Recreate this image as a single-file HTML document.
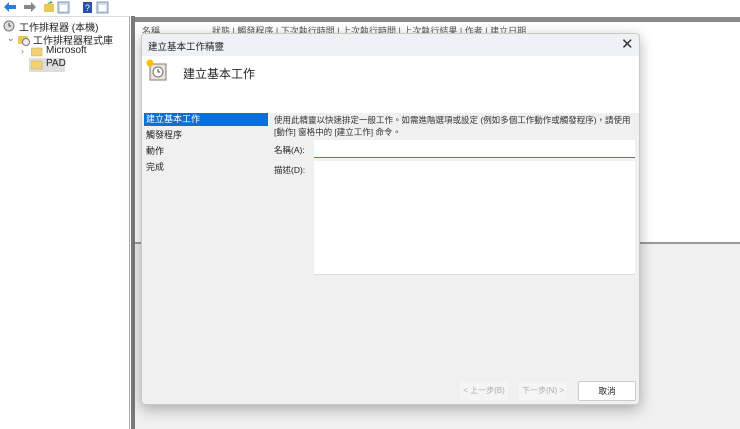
<!DOCTYPE html>
<html><head><meta charset="utf-8"><style>
*{margin:0;padding:0;box-sizing:border-box}
body{width:740px;height:429px;overflow:hidden;background:#fff;font-family:"Liberation Sans","Noto Sans CJK TC",sans-serif;font-size:9px;color:#222;position:relative}
.a{position:absolute}
</style></head><body>
<div class="a" style="left:0;top:0;width:740px;height:16px;background:#fff"></div>
<svg class="a" style="left:2px;top:1px" width="115" height="13">
<path d="M2 6 L7 1 V4 H14 V8 H7 V11 Z" fill="#2a7fd4"/>
<path d="M34 6 L29 1 V4 H22 V8 H29 V11 Z" fill="#888"/>
<rect x="42" y="3" width="10" height="8" fill="#e8c85a"/><path d="M45 3 l4 -3 2 2z" fill="#3a3"/>
<rect x="56" y="1" width="11" height="11" fill="#cfdbe8" stroke="#7b97b8"/><rect x="58" y="4" width="7" height="6" fill="#fff"/>
<rect x="81" y="1" width="9" height="11" fill="#2850a8"/><text x="83" y="10" fill="#fff" font-size="9" font-family="Liberation Sans">?</text>
<rect x="95" y="1" width="11" height="11" fill="#cfdbe8" stroke="#7b97b8"/><rect x="97" y="4" width="7" height="6" fill="#fff"/>
</svg>
<div class="a" style="left:0;top:16px;width:130px;height:413px;border-top:1px solid #ddd;border-right:1px solid #aaa;background:#fff"></div>
<svg class="a" style="left:3px;top:20px" width="14" height="12"><circle cx="6" cy="6" r="5" fill="#ddd" stroke="#777"/><path d="M6 3V6H8" stroke="#444" fill="none"/></svg>
<div class="a" style="left:19px;top:19px;font-size:10px">工作排程器 (本機)</div>
<div class="a" style="left:7px;top:33px;font-size:9px;color:#666">⌄</div>
<svg class="a" style="left:17px;top:33px" width="14" height="13"><rect x="1" y="3" width="10" height="8" fill="#e8c85a"/><circle cx="9" cy="9" r="3.5" fill="#eee" stroke="#777"/></svg>
<div class="a" style="left:33px;top:32px;font-size:10px">工作排程器程式庫</div>
<div class="a" style="left:21px;top:46px;font-size:9px;color:#888">›</div>
<svg class="a" style="left:31px;top:47px" width="12" height="10"><rect x="0" y="1" width="11" height="8" fill="#f0d27a" stroke="#d6b04a" stroke-width=".6"/></svg>
<div class="a" style="left:46px;top:45px;font-size:10px">Microsoft</div>
<div class="a" style="left:29px;top:58px;width:36px;height:14px;background:#ddd"></div>
<svg class="a" style="left:31px;top:60px" width="12" height="10"><rect x="0" y="1" width="11" height="8" fill="#f0d27a" stroke="#d6b04a" stroke-width=".6"/></svg>
<div class="a" style="left:46px;top:58px;font-size:10px">PAD</div>
<div class="a" style="left:131px;top:16px;width:4px;height:413px;background:#7a7a7a"></div>
<div class="a" style="left:135px;top:17px;width:605px;height:5px;background:#8a8a8a"></div>
<div class="a" style="left:135px;top:22px;width:605px;height:220px;background:#fff"></div>
<div class="a" style="left:135px;top:242px;width:605px;height:2px;background:#9a9a9a"></div>
<div class="a" style="left:135px;top:244px;width:605px;height:185px;background:#f0f0f0"></div>
<div class="a" style="left:142px;top:24px;font-size:9px;color:#555;white-space:nowrap">名稱<span style="margin-left:52px">狀態</span> | 觸發程序 | 下次執行時間 | 上次執行時間 | 上次執行結果 | 作者 | 建立日期</div>
<div class="a" style="left:141px;top:33px;width:499px;height:372px;background:#f0f0f0;border:1px solid #c8c8c8;border-radius:4px;box-shadow:0 4px 14px rgba(0,0,0,.3);overflow:hidden">
 <div class="a" style="left:0;top:0;width:499px;height:22px;background:#eef2f7"></div>
 <div class="a" style="left:6px;top:5px;font-size:9.5px">建立基本工作精靈</div>
 <div class="a" style="left:479px;top:1px;font-size:15px;color:#333">✕</div>
 <div class="a" style="left:0;top:22px;width:499px;height:57px;background:#fff"></div>
 <svg class="a" style="left:3px;top:24px" width="24" height="24"><rect x="5" y="6" width="16" height="16" fill="#e8e4dc" stroke="#8a7a6a"/><circle cx="13" cy="14" r="5" fill="#fff" stroke="#777"/><path d="M13 11V14H15" stroke="#444" fill="none"/><circle cx="5" cy="5" r="3.5" fill="#f6c200"/></svg>
 <div class="a" style="left:41px;top:31px;font-size:12px">建立基本工作</div>
 <div class="a" style="left:2px;top:79px;width:124px;height:13px;background:#0a6fd6;color:#fff;padding-left:2px;font-size:9px;line-height:13px">建立基本工作</div>
 <div class="a" style="left:4px;top:94px;font-size:9px">觸發程序</div>
 <div class="a" style="left:4px;top:110px;font-size:9px">動作</div>
 <div class="a" style="left:4px;top:126px;font-size:9px">完成</div>
 <div class="a" style="left:132px;top:80px;width:362px;font-size:8.5px;line-height:12px;color:#333">使用此精靈以快速排定一般工作。如需進階選項或設定 (例如多個工作動作或觸發程序)，請使用 [動作] 窗格中的 [建立工作] 命令。</div>
 <div class="a" style="left:132px;top:110px;font-size:8.5px">名稱(A):</div>
 <div class="a" style="left:172px;top:106px;width:321px;height:18px;background:#fff;border-bottom:1px solid #3a82c4"></div>
 <div class="a" style="left:132px;top:130px;font-size:8.5px">描述(D):</div>
 <div class="a" style="left:172px;top:127px;width:321px;height:114px;background:#fff;border-bottom:1px solid #ddd"></div>
 <div class="a" style="left:318px;top:348px;width:48px;height:18px;background:#f5f5f5;color:#aaa;font-size:8px;text-align:center;line-height:18px">&lt; 上一步(B)</div>
 <div class="a" style="left:377px;top:348px;width:48px;height:18px;background:#f5f5f5;color:#aaa;font-size:8px;text-align:center;line-height:18px">下一步(N) &gt;</div>
 <div class="a" style="left:436px;top:347px;width:58px;height:20px;background:#fff;border:1px solid #ccc;border-radius:2px;font-size:8.5px;text-align:center;line-height:18px">取消</div>
</div>
</body></html>
